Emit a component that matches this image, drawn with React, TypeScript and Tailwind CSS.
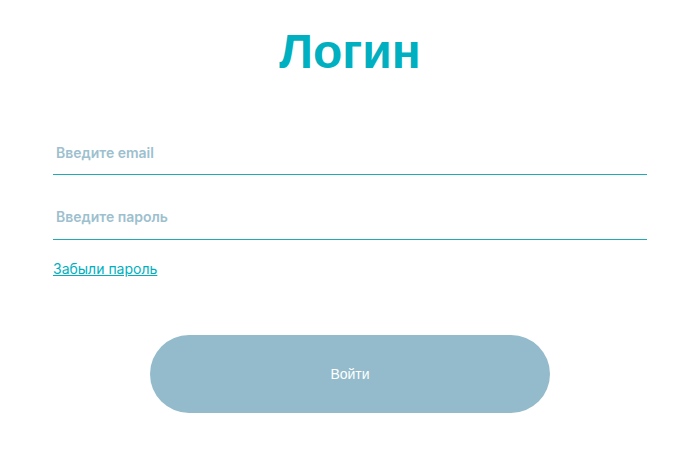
import React from "react"

export default function App() {
  return (
    <div className="w-[700px] h-[450px] bg-white px-[53px] font-['Inter',sans-serif]">
      <h1 className="pt-[26px] text-center text-[48px] leading-[52px] font-bold text-[#00b0c0] font-['Liberation_Sans',Arial,sans-serif]">
        Логин
      </h1>

      <form className="mt-[56px] flex flex-col" onSubmit={(e) => e.preventDefault()}>
        <input
          type="email"
          placeholder="Введите email"
          className="h-[41px] w-full border-b border-[#22a9b8] px-[3px] pb-[4px] text-sm font-semibold text-[#9dc0ce] placeholder:text-[#9dc0ce] outline-none"
        />
        <input
          type="password"
          placeholder="Введите пароль"
          className="mt-[24px] h-[41px] w-full border-b border-[#22a9b8] px-[3px] pb-[6px] text-sm font-semibold text-[#9dc0ce] placeholder:text-[#9dc0ce] outline-none"
        />
        <a href="#" className="mt-[19px] self-start text-sm leading-[20px] text-[#00b0c0] underline">
          Забыли пароль
        </a>

        <button
          type="submit"
          className="mt-[56px] self-center w-[400px] h-[78px] rounded-full bg-[#93bbcb] text-sm text-white font-['Liberation_Sans',Arial,sans-serif]"
        >
          Войти
        </button>
      </form>
    </div>
  )
}
